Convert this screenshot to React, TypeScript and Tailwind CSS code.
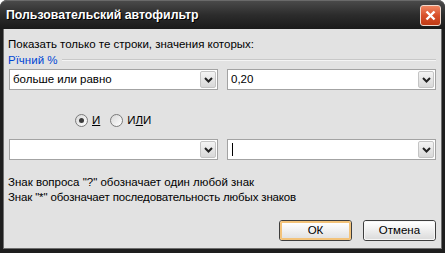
import React from 'react';

const font = { fontFamily: '"Liberation Sans", Arial, sans-serif' };

function Chevron() {
  return (
    <svg width="9" height="6" viewBox="0 0 9 6">
      <path d="M1 1 L4.5 4.5 L8 1" fill="none" stroke="#222" strokeWidth="2" />
    </svg>
  );
}

function Combo({ value, caret }: { value?: string; caret?: boolean }) {
  return (
    <div className="flex h-[21px] w-[209px] items-stretch border border-[#a3a3a3] bg-white">
      <div className="flex flex-1 items-center pl-[3px] text-[11.5px] text-black">
        {caret && <span className="ml-px h-[13px] w-px bg-black" />}
        {value}
      </div>
      <div className="m-px flex w-[16px] items-center justify-center rounded-[2px] border border-[#c4c4c4] bg-gradient-to-b from-[#f4f4f4] to-[#d8d8d8]">
        <Chevron />
      </div>
    </div>
  );
}

function Radio({ checked, label }: { checked?: boolean; label: React.ReactNode }) {
  return (
    <div className="flex items-center gap-[4px]">
      <span className="flex h-[13px] w-[13px] items-center justify-center rounded-full border border-[#7a7a7a] bg-gradient-to-br from-[#d8d8d8] to-white">
        {checked && <span className="h-[5px] w-[5px] rounded-full bg-[#3c3c3c]" />}
      </span>
      <span className="text-[11.5px] text-black">{label}</span>
    </div>
  );
}

function Button({ label, focused }: { label: string; focused?: boolean }) {
  return (
    <div className="h-[21px] w-[73px] rounded-[3px] border border-[#3d3d3d] bg-white">
      <div
        className={
          focused
            ? 'flex h-full w-full items-center justify-center rounded-[2px] border-2 border-[#f3c37a] bg-gradient-to-b from-white to-[#e2e2e2] text-[11.5px]'
            : 'flex h-full w-full items-center justify-center rounded-[2px] border border-[#f6f6f6] bg-gradient-to-b from-white to-[#dcdcdc] text-[11.5px]'
        }
      >
        {label}
      </div>
    </div>
  );
}

export default function App() {
  return (
    <div className="h-[253px] w-[445px] bg-white" style={font}>
      <div className="flex h-full w-full flex-col rounded-t-[7px] bg-[#1e1e1e]">
        {/* Title bar */}
        <div className="flex h-[29px] items-center justify-between rounded-t-[7px] border-t border-[#6a6a6a] bg-gradient-to-b from-[#4a4a4a] via-[#2c2c2c] to-[#1a1a1a] pl-[6px] pr-[4px]">
          <span className="text-[12.3px] font-bold text-white [text-shadow:1px_1px_0_#000]">
            Пользовательский автофильтр
          </span>
          <div className="flex h-[21px] w-[21px] items-center justify-center rounded-[3px] border border-[#f0d8cc] bg-gradient-to-b from-[#ef8560] via-[#d8502a] to-[#c03a14]">
            <svg width="11" height="11" viewBox="0 0 11 11">
              <path d="M1.5 1.5 L9.5 9.5 M9.5 1.5 L1.5 9.5" stroke="white" strokeWidth="2.4" />
            </svg>
          </div>
        </div>

        {/* Client */}
        <div className="mx-[3px] mb-[4px] flex flex-1 flex-col border-l border-r border-b border-[#6e6e6e] bg-[#e2e2e2] pl-[4px] pr-[5px] text-black">
          <div className="mt-[8px] text-[11.5px] leading-[14px]">Показать только те строки, значения которых:</div>
          <div className="mt-[2px] flex items-center gap-[5px]">
            <span className="text-[11.5px] leading-[14px] text-[#0046d5]">Рïчний %</span>
            <div className="flex-1 border-t border-b border-t-[#c8c8c8] border-b-[#f4f4f4]" />
          </div>
          <div className="mt-[2px] flex justify-between pl-[1px]">
            <Combo value="больше или равно" />
            <Combo value="0,20" />
          </div>
          <div className="mt-[22px] flex gap-[10px] pl-[67px]">
            <Radio checked label={<span className="underline">И</span>} />
            <Radio
              label={
                <span>
                  И<span className="underline">Л</span>И
                </span>
              }
            />
          </div>
          <div className="mt-[10px] flex justify-between pl-[1px]">
            <Combo />
            <Combo caret />
          </div>
          <div className="mt-[15px] text-[11.5px] leading-[15px]">
            Знак вопроса "?" обозначает один любой знак
          </div>
          <div className="text-[11.5px] leading-[15px] tracking-[-0.15px]">
            Знак "*" обозначает последовательность любых знаков
          </div>
          <div className="mt-auto mb-[7px] flex justify-end gap-[11px]">
            <Button label="ОК" focused />
            <Button label="Отмена" />
          </div>
        </div>
      </div>
    </div>
  );
}
